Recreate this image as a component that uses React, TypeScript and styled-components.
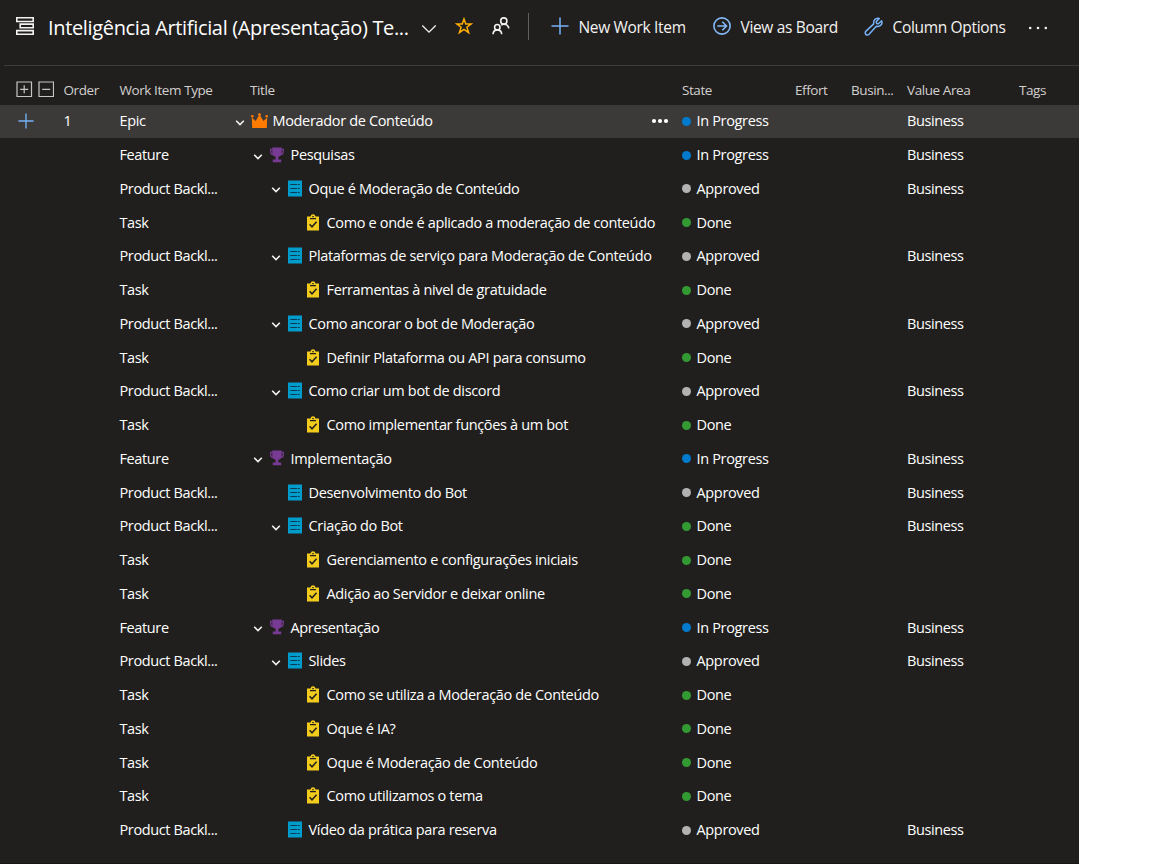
import React from 'react';
import styled, { createGlobalStyle } from 'styled-components';

const GlobalStyle = createGlobalStyle`
  * { box-sizing: border-box; }
  body { margin: 0; background: #ffffff; }
`;

const Page = styled.div`
  width: 1079px;
  height: 864px;
  overflow: hidden;
  background: #211f1e;
  border-bottom: 1px solid #1b1616;
  color: #ffffff;
  font-family: 'Open Sans', 'Noto Sans', sans-serif;
  display: flex;
  flex-direction: column;
`;

const Toolbar = styled.header`
  height: 66px;
  flex: none;
  margin-left: 4px;
  padding: 0 0 13px 11px;
  border-bottom: 1px solid #3d3b3a;
  display: flex;
  align-items: center;
`;

const PageTitle = styled.h1`
  width: 362px;
  margin: 4px 0 0 13px;
  font-size: 20px;
  line-height: 28px;
  font-weight: 400;
  letter-spacing: -0.34px;
  white-space: nowrap;
`;

const Slot = styled.span<{ $left: number; $top?: number }>`
  display: flex;
  flex: none;
  margin-left: ${(p) => p.$left}px;
  margin-top: ${(p) => p.$top ?? 0}px;
`;

const Divider = styled.span`
  width: 1px;
  height: 27px;
  margin-left: 18px;
  background: #605e5c;
`;

const Command = styled.button<{ $left: number; $width: number }>`
  display: flex;
  flex: none;
  align-items: center;
  gap: 9.5px;
  width: ${(p) => p.$width}px;
  margin: 0 0 0 ${(p) => p.$left}px;
  padding: 0;
  border: 0;
  background: none;
  color: #f3f2f1;
  font: 400 15.5px/20px 'Open Sans', 'Noto Sans', sans-serif;
  letter-spacing: -0.33px;
  white-space: nowrap;
`;

const CommandLabel = styled.span`
  padding-top: 1px;
`;

const columns = '63.5px 56px 112.5px 450px 113px 56px 56px 112px 60px';

const HeaderRow = styled.div`
  height: 39px;
  flex: none;
  display: grid;
  grid-template-columns: ${columns};
  align-items: center;
  padding-top: 9px;
  color: #d2d0ce;
  font-size: 13.5px;
  line-height: 18px;
  letter-spacing: -0.42px;
  white-space: nowrap;
`;

const ExpandTools = styled.span`
  display: flex;
  gap: 5px;
  padding: 0 0 2px 16px;
`;

const TitleHeading = styled.span`
  padding-left: 18px;
`;

const Row = styled.div<{ $selected?: boolean }>`
  height: 33.76px;
  flex: none;
  display: grid;
  grid-template-columns: ${columns};
  align-items: center;
  padding-bottom: 1.2px;
  background: linear-gradient(${(p) => (p.$selected ? '#3b3a39, #3b3a39' : 'transparent, transparent')}) top / 100% 33px no-repeat;
  font-size: 14.5px;
  line-height: 20px;
  letter-spacing: -0.34px;
  white-space: nowrap;
`;

const AddCell = styled.span`
  display: flex;
  padding-left: 18px;
`;

const KindCell = styled.span`
  letter-spacing: -0.38px;
`;

const TitleCell = styled.span<{ $level: number }>`
  display: flex;
  align-items: center;
  padding-left: ${(p) => p.$level * 18 + 3}px;
  padding-right: 13px;
`;

const Expander = styled.span`
  display: flex;
  width: 16px;
  padding-top: 3px;
`;

const TypeIcon = styled.span`
  display: flex;
  width: 21.5px;
  padding-bottom: 1px;
`;

const MoreDots = styled.span`
  display: flex;
  margin-left: auto;
`;

const StateCell = styled.span`
  display: flex;
  align-items: center;
  gap: 5.5px;
`;

const StateDot = styled.i<{ $color: string }>`
  width: 9px;
  height: 9px;
  border-radius: 50%;
  background: ${(p) => p.$color};
`;

const BacklogIcon = () => (
  <svg width="20" height="20" viewBox="0 0 20 20" fill="none" stroke="#f3f2f1" strokeWidth="1.6">
    <path d="M1.8 1.8h16.4v3.7H1.800zM5.200 8.100h13v3.700H5.200zM1.800 14.600h16.400v3.700H1.800z" />
  </svg>
);

const PlusIcon = ({ size }: { size: number }) => (
  <svg width={size} height={size} viewBox="0 0 18 18" stroke="#75b2f8" strokeWidth="1.5">
    <path d="M9 .5v17M.5 9h17" />
  </svg>
);

const ChevronIcon = () => (
  <svg width="16" height="10" viewBox="0 0 16 10" fill="none" stroke="#f3f2f1" strokeWidth="1.3">
    <path d="M1.3 1.5 8 8.200l6.700-6.700" />
  </svg>
);

const RowChevron = () => (
  <svg width="10" height="6" viewBox="0 0 10 6" fill="none" stroke="#f3f2f1" strokeWidth="1.6">
    <path d="M1.200.8 5 4.600 8.800.8" />
  </svg>
);

const StarIcon = () => (
  <svg width="18" height="18" viewBox="0 0 18 18" fill="none" stroke="#ffb000" strokeWidth="1.5">
    <path d="m9 1.900 1.800 5h5.400L11.900 10.200l1.700 5.500L9 12.400l-4.600 3.300 1.700-5.500L1.800 6.900h5.400z" />
  </svg>
);

const PeopleIcon = () => (
  <svg width="18" height="18" viewBox="0 0 18 18" fill="none" stroke="#f3f2f1" strokeWidth="1.600">
    <circle cx="11.800" cy="4" r="3.100" />
    <circle cx="5.300" cy="10.200" r="2.700" />
    <path d="M1 17.300c.2-2.800 1.800-4.400 4.300-4.400s4.200 1.600 4.400 4.400M9.300 8.300c.7-.8 1.500-1.100 2.600-1.100 2.700 0 4.500 1.500 4.900 4.100" />
  </svg>
);

const ArrowCircleIcon = () => (
  <svg width="18" height="18" viewBox="0 0 18 18" fill="none" stroke="#85b9f8" strokeWidth="1.6">
    <circle cx="9" cy="9" r="8.100" />
    <path d="M4.300 9h9M9.300 4.800 13.500 9l-4.200 4.200" />
  </svg>
);

const WrenchIcon = () => (
  <svg width="19" height="19" viewBox="0 0 19 19" fill="none" stroke="#75b2f8" strokeWidth="1.500" strokeLinejoin="round">
    <path d="M15.300 1.500 12.200 4.600l.4 1.800 1.800.4 3.200-3.100c.8 2-.1 4.300-1.800 5.200-1.200.7-2.400.7-3.500.4l-7.200 7.900c-1 1-2.400 1-3.300.2-.9-1-.8-2.400.2-3.300l7.700-7.200C9.100 3.500 11.300.6 15.300 1.500z" />
  </svg>
);

const DotsIcon = ({ width, r, gap, color }: { width: number; r: number; gap: number; color: string }) => (
  <svg width={width} height="6" viewBox={`0 0 ${width} 6`} fill={color}>
    {[-1, 0, 1].map((i) => (
      <circle key={i} cx={width / 2 + i * gap} cy="3" r={r} />
    ))}
  </svg>
);

const BoxIcon = ({ plus }: { plus?: boolean }) => (
  <svg width="16.500" height="17" viewBox="0 0 16.500 17" fill="none" stroke="#c8c6c4" strokeWidth="1.200">
    <path d="M1 1h14.500v14.500H1zM4.200 8.300h8" />
    {plus && <path d="M8.200 4.300v8" />}
  </svg>
);

const CrownIcon = () => (
  <svg width="17" height="16" viewBox="0 0 17 16" fill="#ff7b00">
    <path d="M1.200 15 .8 4.500 4.600 8 8.500 1.500 12.400 8l3.800-3.500L15.800 15z" />
    <circle cx="1.300" cy="3.300" r="1.300" />
    <circle cx="8.500" cy="1.600" r="1.400" />
    <circle cx="15.700" cy="3.300" r="1.300" />
  </svg>
);

const TrophyIcon = () => (
  <svg width="16" height="16" viewBox="0 0 16 16" fill="none">
    <path d="M3.500 2.300H1.700v2.200c0 2 .9 3 2.600 3M12.500 2.300h1.800v2.200c0 2-.9 3-2.600 3" stroke="#773b93" strokeWidth="1.300" />
    <path d="M3.300.5h9.400v5.300c0 2.200-1.300 3.600-3.300 4.100v2.600h2.800v2.700H3.800v-2.700h2.800V9.900c-2-.5-3.300-1.900-3.300-4.100z" fill="#773b93" />
  </svg>
);

const BookIcon = () => (
  <svg width="16" height="17" viewBox="0 0 16 17">
    <path d="M1 .5h14v16H1z" fill="#009ccc" />
    <path d="M3.300 4.500h6.900M3.300 8.500h6.900M3.300 12.500h6.900M10.900 4.500h1.900M10.900 8.500h1.900M10.900 12.500h1.900" stroke="#0b3c56" strokeWidth="1.100" />
  </svg>
);

const TaskIcon = () => (
  <svg width="16" height="17" viewBox="0 0 16 17" fill="none">
    <path d="M2 2.500h3.500A2.600 2.600 0 0 1 8 .3a2.600 2.600 0 0 1 2.500 2.200H14v14H2z" fill="#f2cb1d" />
    <path d="M5 4.700h6M7.300 2.700h1.400" stroke="#211f1e" strokeWidth="1.300" />
    <path d="m4.600 10.300 2.400 2.500 4.600-5" stroke="#211f1e" strokeWidth="1.500" />
  </svg>
);

type Kind = 'Epic' | 'Feature' | 'Product Backl...' | 'Task';
type State = 'In Progress' | 'Approved' | 'Done';

const kinds: Record<Kind, { level: number; icon: React.ReactNode }> = {
  Epic: { level: 0, icon: <CrownIcon /> },
  Feature: { level: 1, icon: <TrophyIcon /> },
  'Product Backl...': { level: 2, icon: <BookIcon /> },
  Task: { level: 3, icon: <TaskIcon /> },
};

const stateColors: Record<State, string> = {
  'In Progress': '#007acc',
  Approved: '#b2b2b2',
  Done: '#339933',
};

const PBI: Kind = 'Product Backl...';

const items: [Kind, string, State, boolean][] = [
  ['Epic', 'Moderador de Conteúdo', 'In Progress', true],
  ['Feature', 'Pesquisas', 'In Progress', true],
  [PBI, 'Oque é Moderação de Conteúdo', 'Approved', true],
  ['Task', 'Como e onde é aplicado a moderação de conteúdo', 'Done', false],
  [PBI, 'Plataformas de serviço para Moderação de Conteúdo', 'Approved', true],
  ['Task', 'Ferramentas à nivel de gratuidade', 'Done', false],
  [PBI, 'Como ancorar o bot de Moderação', 'Approved', true],
  ['Task', 'Definir Plataforma ou API para consumo', 'Done', false],
  [PBI, 'Como criar um bot de discord', 'Approved', true],
  ['Task', 'Como implementar funções à um bot', 'Done', false],
  ['Feature', 'Implementação', 'In Progress', true],
  [PBI, 'Desenvolvimento do Bot', 'Approved', false],
  [PBI, 'Criação do Bot', 'Done', true],
  ['Task', 'Gerenciamento e configurações iniciais', 'Done', false],
  ['Task', 'Adição ao Servidor e deixar online', 'Done', false],
  ['Feature', 'Apresentação', 'In Progress', true],
  [PBI, 'Slides', 'Approved', true],
  ['Task', 'Como se utiliza a Moderação de Conteúdo', 'Done', false],
  ['Task', 'Oque é IA?', 'Done', false],
  ['Task', 'Oque é Moderação de Conteúdo', 'Done', false],
  ['Task', 'Como utilizamos o tema', 'Done', false],
  [PBI, 'Vídeo da prática para reserva', 'Approved', false],
];

export default function App() {
  return (
    <Page>
      <GlobalStyle />
      <Toolbar>
        <Slot $left={0}><BacklogIcon /></Slot>
        <PageTitle>Inteligência Artificial (Apresentação) Te...</PageTitle>
        <Slot $left={11} $top={5}><ChevronIcon /></Slot>
        <Slot $left={18}><StarIcon /></Slot>
        <Slot $left={19}><PeopleIcon /></Slot>
        <Divider />
        <Command $left={22} $width={136}><PlusIcon size={18} /><CommandLabel>New Work Item</CommandLabel></Command>
        <Command $left={26} $width={126}><ArrowCircleIcon /><CommandLabel>View as Board</CommandLabel></Command>
        <Command $left={25} $width={142}><WrenchIcon /><CommandLabel>Column Options</CommandLabel></Command>
        <Slot $left={22} $top={3}><DotsIcon width={20} r={1.3} gap={7.8} color="#f3f2f1" /></Slot>
      </Toolbar>
      <HeaderRow>
        <ExpandTools><BoxIcon plus /><BoxIcon /></ExpandTools>
        <span>Order</span>
        <span>Work Item Type</span>
        <TitleHeading>Title</TitleHeading>
        <span>State</span>
        <span>Effort</span>
        <span>Busin...</span>
        <span>Value Area</span>
        <span>Tags</span>
      </HeaderRow>
      {items.map(([kind, title, state, open], i) => (
        <Row key={i} $selected={i === 0}>
          <AddCell>{i === 0 && <PlusIcon size={16} />}</AddCell>
          <span>{i === 0 && '1'}</span>
          <KindCell>{kind}</KindCell>
          <TitleCell $level={kinds[kind].level}>
            <Expander>{open && <RowChevron />}</Expander>
            <TypeIcon>{kinds[kind].icon}</TypeIcon>
            {title}
            {i === 0 && <MoreDots><DotsIcon width={18} r={2.1} gap={6} color="#ffffff" /></MoreDots>}
          </TitleCell>
          <StateCell><StateDot $color={stateColors[state]} />{state}</StateCell>
          <span />
          <span />
          <KindCell>{kind !== 'Task' && 'Business'}</KindCell>
          <span />
        </Row>
      ))}
    </Page>
  );
}
